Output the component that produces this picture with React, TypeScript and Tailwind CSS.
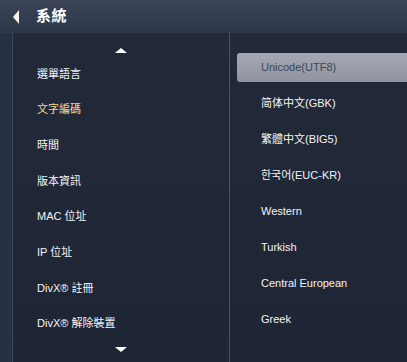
import React from 'react'

const menu = ['選單語言', '文字編碼', '時間', '版本資訊', 'MAC 位址', 'IP 位址', 'DivX® 註冊', 'DivX® 解除裝置']
const encodings = ['Unicode(UTF8)', '简体中文(GBK)', '繁體中文(BIG5)', '한국어(EUC-KR)', 'Western', 'Turkish', 'Central European', 'Greek']

export default function App() {
    return (
        <div
            className="w-[407px] h-[362px] overflow-hidden flex flex-col bg-[#1f2636] text-[11px] text-[#f4f4f6]"
            style={{ fontFamily: '"Liberation Sans", "Noto Sans CJK TC", sans-serif' }}
        >
            {/* Header */}
            <div className="h-[33px] shrink-0 flex items-center bg-gradient-to-b from-[#3b4457] to-[#2f384a]">
                <div className="ml-[13px] w-0 h-0 border-y-[7px] border-y-transparent border-r-[6px] border-r-[#f4f4ee]" />
                <span className="ml-[17px] text-[15px] font-bold text-white tracking-wide">系統</span>
            </div>

            <div className="flex flex-1 min-h-0">
                {/* Left edge strip */}
                <div className="w-[13px] bg-[#283043] border-r border-[#3d4558]" />

                {/* Menu column */}
                <div className="w-[217px] flex flex-col bg-gradient-to-b from-[#222a3a] to-[#1e2534] border-r border-[#4a5264]">
                    <div className="h-[23px] flex items-end justify-center pb-[3px]">
                        <div className="w-0 h-0 border-x-[6px] border-x-transparent border-b-[5px] border-b-white" />
                    </div>
                    {menu.map((m, i) => (
                        <div
                            key={m}
                            className={
                                'h-[35.7px] flex items-center pl-[24px] ' +
                                (i === 1 ? 'text-[#f2dc9a]' : '')
                            }
                        >
                            {m}
                        </div>
                    ))}
                    <div className="flex justify-center pt-[5px]">
                        <div className="w-0 h-0 border-x-[6px] border-x-transparent border-t-[5px] border-t-white" />
                    </div>
                </div>

                {/* Encoding column */}
                <div className="flex-1 flex flex-col pt-[16px] pl-[7px] bg-gradient-to-b from-[#222a3a] to-[#1e2534]">
                    {encodings.map((e, i) => (
                        <div key={e} className="h-9 flex items-center">
                            {i === 0 ? (
                                <div className="w-full h-[29px] flex items-center pl-[24px] rounded-l-[3px] bg-gradient-to-b from-[#a4a8b2] to-[#8f949f] text-[#3e4454]">
                                    {e}
                                </div>
                            ) : (
                                <span className="pl-[24px]">{e}</span>
                            )}
                        </div>
                    ))}
                </div>
            </div>
        </div>
    )
}
